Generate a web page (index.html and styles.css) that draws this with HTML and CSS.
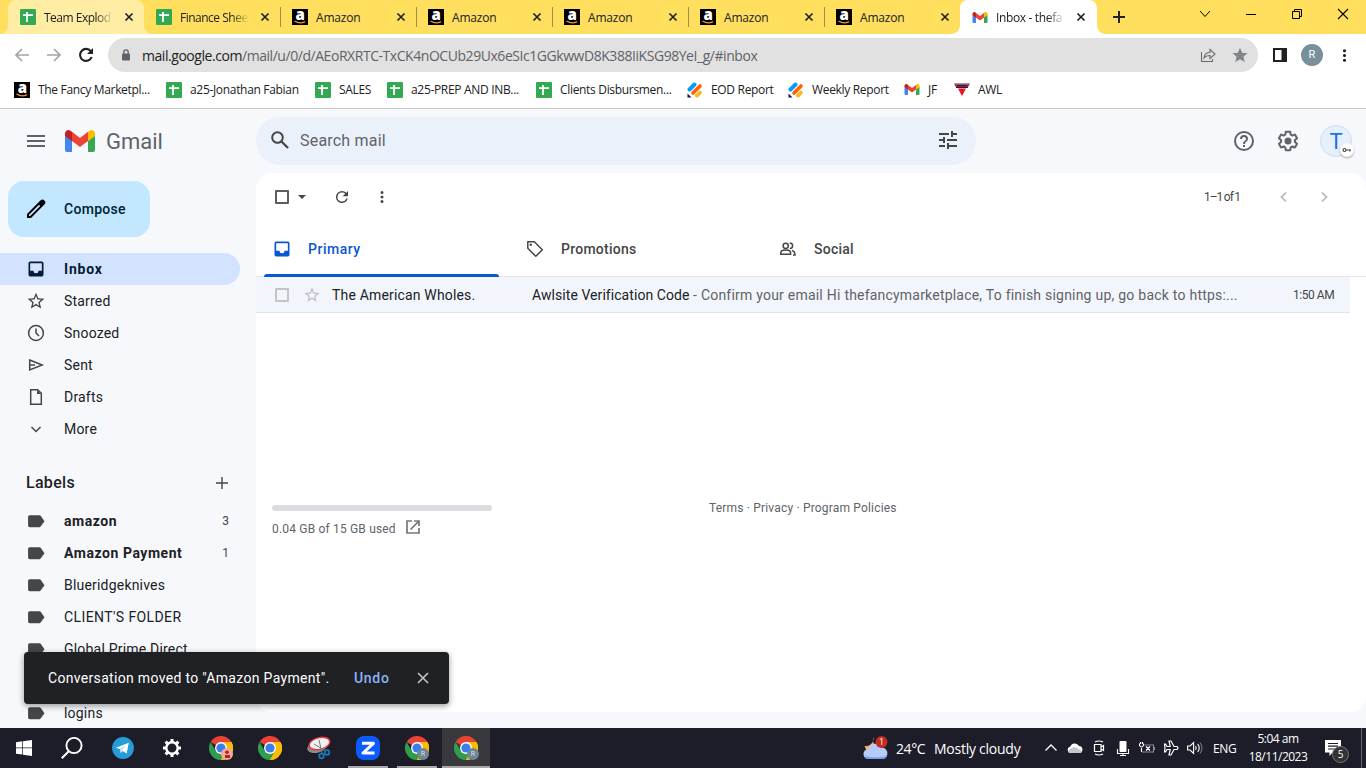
FILE: index.html
```
<!DOCTYPE html>
<html lang="en">
<head>
    <meta charset="utf-8">
    <title>Inbox - Gmail</title>
    <link rel="stylesheet" href="styles.css">
</head>
<body>
    <!-- shared icons -->
    <svg class="defs" width="0" height="0">
        <symbol id="sheets" viewBox="0 0 16 16">
            <rect width="16" height="16" rx="1" fill="#34a853"/>
            <path d="M3 6.200h10M7 3v10" stroke="#fff" stroke-width="1.800"/>
        </symbol>
        <symbol id="amazon" viewBox="0 0 16 16">
            <rect width="16" height="16" fill="#000"/>
            <text x="8.200" y="10.500" text-anchor="middle" font-family="Open Sans, sans-serif" font-weight="800" font-size="15" fill="#fff">a</text>
            <path d="M2.500 12q5.500 3.400 10.500.6" fill="none" stroke="#f39a1e" stroke-width="1.300"/>
        </symbol>
        <symbol id="gmail" viewBox="0 0 30 22">
            <path d="M0 5v15a2 2 0 0 0 2 2h5V10z" fill="#4285f4"/>
            <path d="M23 10v12h5a2 2 0 0 0 2-2V5z" fill="#34a853"/>
            <path d="M7 1.800 15 8l8-6.200V11l-8 6-8-6z" fill="#ea4335"/>
            <path d="M0 4v2l7 5.300V1.800L5.400.7C3.100-1 0 .7 0 4z" fill="#c5221f"/>
            <path d="M30 4v2l-7 5.300V1.800L24.600.7C26.900-1 30 .7 30 4z" fill="#fbbc04"/>
        </symbol>
        <symbol id="close" viewBox="0 0 16 16">
            <path d="M4.500 4.500l7 7M11.500 4.500l-7 7" stroke="currentColor" stroke-width="1.700"/>
        </symbol>
        <symbol id="jot" viewBox="0 0 16 16">
            <path d="M2.500 7.500l5-5" stroke="#0a9bff" stroke-width="4" stroke-linecap="round"/>
            <path d="M6 11l7-7" stroke="#ff6100" stroke-width="3.600" stroke-linecap="round"/>
            <path d="M10 13.500l2.800-2.800" stroke="#ffb629" stroke-width="4" stroke-linecap="round"/>
            <path d="M.5 11.500v4h4z" fill="#0a1551"/>
        </symbol>
        <symbol id="inbox" viewBox="0 0 24 24">
            <path fill="currentColor" d="M19 3H5a2 2 0 0 0-2 2v14a2 2 0 0 0 2 2h14a2 2 0 0 0 2-2V5a2 2 0 0 0-2-2zm0 11h-4a3 3 0 0 1-6 0H5V5h14z"/>
        </symbol>
        <symbol id="star" viewBox="0 0 24 24">
            <path fill="currentColor" d="M22 9.240l-7.190-.62L12 2 9.190 8.630 2 9.240l5.460 4.730L5.820 21 12 17.270 18.180 21l-1.630-7.030zM12 15.400l-3.760 2.270 1-4.280-3.320-2.880 4.380-.38L12 6.100l1.710 4.040 4.380.38-3.320 2.880 1 4.280z"/>
        </symbol>
        <symbol id="label" viewBox="0 0 24 24">
            <path fill="currentColor" d="M17.600 5.800A2 2 0 0 0 16 5H4.500a2 2 0 0 0-2 2v10.500a2 2 0 0 0 2 2H16c.7 0 1.300-.3 1.600-.8L22.200 12.200z"/>
        </symbol>
        <symbol id="more-vert" viewBox="0 0 24 24">
            <path fill="currentColor" d="M12 8a2 2 0 1 0 0-4 2 2 0 0 0 0 4zm0 2a2 2 0 1 0 0 4 2 2 0 0 0 0-4zm0 6a2 2 0 1 0 0 4 2 2 0 0 0 0-4z"/>
        </symbol>
        <symbol id="refresh" viewBox="0 0 24 24">
            <path fill="currentColor" d="M17.650 6.350A7.960 7.960 0 0 0 12 4a8 8 0 1 0 7.730 10h-2.080A6 6 0 1 1 12 6c1.660 0 3.140.69 4.220 1.780L13 11h7V4z"/>
        </symbol>
        <symbol id="chrome" viewBox="0 0 24 24">
            <path d="M12 12 1.600 6A12 12 0 0 1 22.400 6z" fill="#ea4335"/>
            <path d="M12 12 22.400 6A12 12 0 0 1 12 24z" fill="#fbbc04"/>
            <path d="M1.600 6A12 12 0 0 0 12 24l5.200-9-5.200 1-5.200-1z" fill="#2e9e4c"/>
            <path d="M12 6h10.400A12 12 0 0 1 12 24l5.200-9z" fill="#fbbc04"/>
            <circle cx="12" cy="12" r="6" fill="#fff"/>
            <circle cx="12" cy="12" r="4.600" fill="#3b7ded"/>
        </symbol>
    </svg>

    <div class="tabstrip">
        <div class="tab hover long"><svg class="fav"><use href="#sheets"/></svg><span>Team Explod</span><svg class="x"><use href="#close"/></svg></div>
        <div class="tab long"><svg class="fav"><use href="#sheets"/></svg><span>Finance Shee</span><svg class="x"><use href="#close"/></svg></div>
        <div class="tab line"><svg class="fav"><use href="#amazon"/></svg><span>Amazon</span><svg class="x"><use href="#close"/></svg></div>
        <div class="tab line"><svg class="fav"><use href="#amazon"/></svg><span>Amazon</span><svg class="x"><use href="#close"/></svg></div>
        <div class="tab line"><svg class="fav"><use href="#amazon"/></svg><span>Amazon</span><svg class="x"><use href="#close"/></svg></div>
        <div class="tab line"><svg class="fav"><use href="#amazon"/></svg><span>Amazon</span><svg class="x"><use href="#close"/></svg></div>
        <div class="tab line"><svg class="fav"><use href="#amazon"/></svg><span>Amazon</span><svg class="x"><use href="#close"/></svg></div>
        <div class="tab active long"><svg class="fav gm"><use href="#gmail"/></svg><span>Inbox - thefa</span><svg class="x"><use href="#close"/></svg></div>
        <svg class="newtab" viewBox="0 0 16 16"><path d="M8 2v12M2 8h12" stroke="#222" stroke-width="2"/></svg>
        <div class="window-buttons">
            <svg viewBox="0 0 12 12"><path d="M1 3l5 5.500L11 3" fill="none" stroke="#000"/></svg>
            <svg viewBox="0 0 12 12"><path d="M1 6.500h10" stroke="#000"/></svg>
            <svg viewBox="0 0 12 12"><path d="M1.500 3.500h7v7h-7zM3.500 3.500v-2h7v7h-2" fill="none" stroke="#000"/></svg>
            <svg viewBox="0 0 12 12"><path d="M1 1l10 10M11 1L1 11" stroke="#000" stroke-width="1.100"/></svg>
        </div>
    </div>

    <div class="toolbar">
        <svg class="nav off" viewBox="0 0 16 16"><path d="M15 8H2M8 2L2 8l6 6" fill="none" stroke="currentColor" stroke-width="1.700"/></svg>
        <svg class="nav off" viewBox="0 0 16 16"><path d="M1 8h13M8 2l6 6-6 6" fill="none" stroke="currentColor" stroke-width="1.700"/></svg>
        <svg class="nav" viewBox="0 0 16 16"><path d="M13.700 10A6 6 0 1 1 12.800 4.200" fill="none" stroke="currentColor" stroke-width="2.100"/><path d="M15 1v6H9z" fill="currentColor"/></svg>
        <div class="omnibox">
            <svg class="lock" viewBox="0 0 10 12"><rect x="1" y="4.500" width="8" height="7" rx="1" fill="#5f6368"/><path d="M2.800 5V3a2.200 2.200 0 0 1 4.400 0v2" fill="none" stroke="#5f6368" stroke-width="1.300"/></svg>
            <div class="url"><b>mail.google.com</b>/mail/u/0/d/AEoRXRTC-TxCK4nOCUb29Ux6eSIc1GGkwwD8K388IiKSG98YeI_g/#inbox</div>
            <svg class="share" viewBox="0 0 16 16"><path d="M1.500 5v9.500h11V12M4 11c.5-4 3-5.500 6-5.500V2.500l5 4.500-5 4.500V8.500C7.500 8.500 5.500 9 4 11z" fill="none" stroke="#6a6d71" stroke-width="1.100"/></svg>
            <svg class="bookmark-star" viewBox="0 0 16 16"><path d="M8 .8l2.100 5 5.400.4-4.100 3.500 1.300 5.300L8 12.200 3.300 15l1.300-5.300L.5 6.200l5.400-.4z" fill="#80868b"/></svg>
        </div>
        <svg class="panel" viewBox="0 0 14 14"><path d="M0 0h14v14H0zM2 2v10h6.500V2z" fill="#202124" fill-rule="evenodd"/></svg>
        <span class="profile">R</span>
        <svg class="menu"><use href="#more-vert"/></svg>
    </div>

    <div class="bookmarks">
        <a><svg><use href="#amazon"/></svg>The Fancy Marketpl...</a>
        <a><svg><use href="#sheets"/></svg>a25-Jonathan Fabian</a>
        <a><svg><use href="#sheets"/></svg>SALES</a>
        <a><svg><use href="#sheets"/></svg>a25-PREP AND INB...</a>
        <a><svg><use href="#sheets"/></svg>Clients Disbursmen...</a>
        <a><svg><use href="#jot"/></svg>EOD Report</a>
        <a><svg><use href="#jot"/></svg>Weekly Report</a>
        <a><svg class="gm"><use href="#gmail"/></svg>JF</a>
        <a><svg viewBox="0 0 16 16"><path d="M0 1.500h16L13.500 6h-11z" fill="#7d2a5a"/><path d="M3 3.500h10M2 5.500h12" stroke="#221a50"/><path d="M1 2h14" stroke="#c98a54"/><path d="M4 6.500h8L8 14z" fill="#f5101f"/></svg>AWL</a>
    </div>

    <div class="gmail">
        <header>
            <svg class="burger" viewBox="0 0 18 12"><path d="M0 1h18M0 6h18M0 11h18" stroke="#5f6368" stroke-width="2"/></svg>
            <svg class="logo"><use href="#gmail"/></svg>
            <span class="brand">Gmail</span>
            <div class="search">
                <svg viewBox="0 0 18 18"><circle cx="6.500" cy="6.500" r="5.300" fill="none" stroke="#444746" stroke-width="2"/><path d="M10.500 10.500l6.500 6.500" stroke="#444746" stroke-width="2.300"/></svg>
                <span>Search mail</span>
                <svg viewBox="0 0 18 18"><path d="M0 3h10M12 3h6M13 0v6M0 9h6M8 9h10M5 6v6M0 15h6M8 15h10M9 12v6" stroke="#444746" stroke-width="2"/></svg>
            </div>
            <div class="header-icons">
                <svg viewBox="0 0 24 24"><path fill="#5f6368" d="M11 18h2v-2h-2zm1-16a10 10 0 1 0 0 20 10 10 0 0 0 0-20zm0 18a8 8 0 1 1 0-16 8 8 0 0 1 0 16zm0-14a4 4 0 0 0-4 4h2a2 2 0 1 1 4 0c0 2-3 1.750-3 5h2c0-2.250 3-2.500 3-5a4 4 0 0 0-4-4z"/></svg>
                <svg viewBox="0 0 24 24"><path fill="#5f6368" d="M13.850 22.250h-3.700c-.74 0-1.360-.54-1.450-1.270l-.27-1.890c-.27-.14-.53-.29-.79-.46l-1.800.72c-.7.26-1.470-.03-1.810-.65L2.200 15.530c-.35-.66-.2-1.440.36-1.880l1.530-1.190c-.01-.15-.02-.3-.02-.46s.01-.31.020-.46l-1.520-1.190c-.59-.45-.74-1.260-.37-1.880l1.850-3.190c.34-.62 1.110-.9 1.790-.63l1.810.73c.26-.17.52-.32.78-.46l.27-1.910c.09-.7.71-1.250 1.440-1.250h3.700c.74 0 1.360.54 1.450 1.270l.27 1.890c.27.14.53.29.79.46l1.800-.72c.71-.26 1.480.03 1.820.65l1.840 3.180c.36.66.2 1.440-.36 1.880l-1.520 1.190c.1.150.2.300.2.460s-.1.310-.2.460l1.520 1.190c.56.450.72 1.230.37 1.860l-1.860 3.220c-.34.62-1.110.9-1.800.63l-1.800-.72c-.26.17-.52.32-.78.46l-.27 1.910c-.1.680-.72 1.220-1.460 1.220zm-3.230-2h2.760l.37-2.550.53-.22c.44-.18.88-.44 1.340-.78l.45-.34 2.380.96 1.380-2.400-2.030-1.580.07-.56c.03-.26.06-.51.060-.78s-.03-.53-.06-.78l-.07-.56 2.030-1.580-1.390-2.400-2.390.96-.45-.35c-.42-.32-.87-.58-1.330-.77l-.52-.22-.37-2.550h-2.760l-.37 2.550-.53.210c-.44.190-.88.440-1.340.790l-.45.330-2.380-.95-1.390 2.390 2.030 1.580-.07.560a7 7 0 0 0-.06.790c0 .26.020.53.060.78l.07.560-2.030 1.580 1.380 2.400 2.390-.96.450.35c.43.33.86.58 1.330.77l.53.220z"/><circle cx="12" cy="12" r="3.500" fill="#5f6368"/></svg>
                <span class="avatar">T<i><svg viewBox="0 0 10 6"><circle cx="2.500" cy="3" r="1.500" fill="none" stroke="#444" stroke-width="1.200"/><path d="M4.200 3H9M7.800 3v1.600" stroke="#444" stroke-width="1.200"/></svg></i></span>
            </div>
        </header>

        <div class="columns">
            <nav class="sidebar">
                <a class="compose"><svg viewBox="0 0 24 24"><path d="M20.400 3.600a2.800 2.800 0 0 0-4 0L3 17v4h4L20.400 7.600a2.800 2.800 0 0 0 0-4zM6.200 19H5v-1.200L15 7.800 16.200 9z" fill="#000"/></svg>Compose</a>
                <a class="item current"><svg><use href="#inbox"/></svg>Inbox</a>
                <a class="item"><svg><use href="#star"/></svg>Starred</a>
                <a class="item"><svg viewBox="0 0 20 20"><circle cx="10" cy="10" r="7.400" fill="none" stroke="currentColor" stroke-width="1.500"/><path d="M10 5.500V10l3 3" fill="none" stroke="currentColor" stroke-width="1.500"/></svg>Snoozed</a>
                <a class="item"><svg viewBox="0 0 20 20"><path d="M3.700 5l12.500 5-12.500 5zM4 10h5" fill="none" stroke="currentColor" stroke-width="1.500"/></svg>Sent</a>
                <a class="item"><svg viewBox="0 0 20 20"><path d="M4.700 2.700h7l3.600 3.600v11H4.700z" fill="none" stroke="currentColor" stroke-width="1.500"/><path d="M11 3v4h4z" fill="currentColor"/></svg>Drafts</a>
                <a class="item"><svg viewBox="0 0 20 20"><path d="M5.500 8l4.500 4.500L14.500 8" fill="none" stroke="currentColor" stroke-width="1.500"/></svg>More</a>
                <div class="labels-title">Labels<svg viewBox="0 0 12 12"><path d="M6 0v12M0 6h12" stroke="#444746" stroke-width="1.400"/></svg></div>
                <a class="item unread"><svg><use href="#label"/></svg>amazon<em>3</em></a>
                <a class="item unread"><svg><use href="#label"/></svg>Amazon Payment<em>1</em></a>
                <a class="item"><svg><use href="#label"/></svg>Blueridgeknives</a>
                <a class="item caps"><svg><use href="#label"/></svg>CLIENT'S FOLDER</a>
                <a class="item"><svg><use href="#label"/></svg>Global Prime Direct</a>
                <a class="item"><svg><use href="#label"/></svg></a>
                <a class="item"><svg><use href="#label"/></svg>logins</a>
            </nav>

            <main>
                <div class="actions">
                    <span class="checkbox"></span>
                    <span class="caret"></span>
                    <svg class="refresh"><use href="#refresh"/></svg>
                    <svg class="dots"><use href="#more-vert"/></svg>
                    <span class="count">1–1 of 1</span>
                    <svg class="page" viewBox="0 0 20 20"><path d="M12 5.500L7.500 10l4.500 4.500" fill="none" stroke="#b4b5b5" stroke-width="1.700"/></svg>
                    <svg class="page" viewBox="0 0 20 20"><path d="M8 5.500l4.500 4.500L8 14.500" fill="none" stroke="#b4b5b5" stroke-width="1.700"/></svg>
                </div>
                <div class="categories">
                    <div class="category selected"><svg><use href="#inbox"/></svg>Primary</div>
                    <div class="category"><svg viewBox="0 0 20 20"><path d="M2.800 2.800h6.500l8 8-6.500 6.500-8-8z" fill="none" stroke="currentColor" stroke-width="1.500" stroke-linejoin="round"/><circle cx="5.800" cy="5.800" r="1.200" fill="currentColor"/></svg>Promotions</div>
                    <div class="category"><svg viewBox="0 0 20 20"><path d="M2.800 15.200v-1.500c0-2 3-2.700 4.900-2.700s4.900.7 4.900 2.700v1.500z" fill="none" stroke="currentColor" stroke-width="1.500"/><circle cx="7.700" cy="6.800" r="2.600" fill="none" stroke="currentColor" stroke-width="1.500"/><path d="M11.800 4a2.800 2.800 0 0 1 0 5.600M14 11.500c2 .5 3 1.500 3 4.500h-2" fill="none" stroke="currentColor" stroke-width="1.500"/></svg>Social</div>
                </div>
                <div class="mail">
                    <span class="checkbox"></span>
                    <svg><use href="#star"/></svg>
                    <span class="sender">The American Wholes.</span>
                    <span class="subject">Awlsite Verification Code</span>
                    <span class="snippet">- Confirm your email Hi thefancymarketplace, To finish signing up, go back to https:...</span>
                    <span class="time">1:50 AM</span>
                </div>
                <footer>
                    <div class="storage">
                        <div class="bar"></div>
                        <span>0.04 GB of 15 GB used</span><svg viewBox="0 0 14 14"><path d="M6 1H1v12h12V8M8 1h5v5M13 1L4.500 9.500" fill="none" stroke="#747779" stroke-width="1.700"/></svg>
                    </div>
                    <div class="policies">Terms · Privacy · Program Policies</div>
                </footer>
            </main>
        </div>

        <div class="snackbar">
            <span>Conversation moved to "Amazon Payment".</span>
            <b>Undo</b>
            <svg viewBox="0 0 12 12"><path d="M1 1l10 10M11 1L1 11" stroke="#c4c7c5" stroke-width="1.600"/></svg>
        </div>
    </div>

    <div class="taskbar">
        <div class="apps">
            <span><svg width="16" height="16" viewBox="0 0 16 16"><path d="M0 2.200l6.300-.9v6.200H0zM7 1.200L16 0v7.500H7zM0 8.300h6.300v6.300L0 13.700zM7 8.300h9V16l-9-1.200z" fill="#fff"/></svg></span>
            <span><svg width="22" height="22" viewBox="0 0 22 22"><circle cx="13" cy="8.500" r="7.600" fill="none" stroke="#fff" stroke-width="1.900"/><path d="M8 14l-7.200 7.200" stroke="#fff" stroke-width="2"/></svg></span>
            <span><svg width="22" height="22" viewBox="0 0 22 22"><circle cx="11" cy="11" r="10.900" fill="#269cd8"/><path d="M4 10.800l12.800-5-2.100 10.800-4-2.700-2 2-.5-3.600z" fill="#fff"/><path d="M8.200 12.300l6-4.500-4.500 5.500-1 2.600z" fill="#b5d6ea"/></svg></span>
            <span><svg width="20" height="20" viewBox="0 0 20 20"><circle cx="10" cy="10" r="5.700" fill="none" stroke="#fff" stroke-width="2.400"/><path d="M10 1v3.500M10 15.500V19M1 10h3.500M15.500 10H19M3.600 3.600l2.500 2.500M13.900 13.900l2.500 2.500M16.400 3.600l-2.500 2.500M6.100 13.900l-2.500 2.500" stroke="#fff" stroke-width="3"/></svg></span>
            <span><svg width="24" height="24"><use href="#chrome"/></svg><i class="badge pink"></i></span>
            <span><svg width="24" height="24"><use href="#chrome"/></svg></span>
            <span><svg width="24" height="24" viewBox="0 0 24 24"><ellipse cx="10.500" cy="10.500" rx="10.500" ry="6" transform="rotate(-18 10.500 10.500)" fill="#8d8991"/><ellipse cx="12.500" cy="7.500" rx="10.500" ry="5.800" transform="rotate(-14 12.500 7.500)" fill="#f3f0f1" stroke="#dd3a3d" stroke-width="1.400"/><path d="M12 4l3 13M7 8l10 6" stroke="#777" fill="none"/><circle cx="14.500" cy="20" r="2.300" fill="none" stroke="#1679b9" stroke-width="1.800"/><circle cx="20" cy="16.500" r="2.300" fill="none" stroke="#1679b9" stroke-width="1.800"/></svg></span>
            <span class="open"><svg width="24" height="24" viewBox="0 0 24 24"><rect width="24" height="24" rx="8" fill="#0b5cff"/><path d="M6 7.300h11.500L7 17h11.500" fill="none" stroke="#fff" stroke-width="3" stroke-linejoin="round"/></svg></span>
            <span class="open"><svg width="24" height="24"><use href="#chrome"/></svg><i class="badge">R</i></span>
            <span class="focused"><svg width="24" height="24"><use href="#chrome"/></svg><i class="badge">R</i></span>
        </div>
        <div class="weather">
            <svg width="26" height="26" viewBox="0 0 26 26"><path d="M10.500 2a8 8 0 0 0 8 11l-4 4H4L1.500 11a8 8 0 0 0 9-9z" fill="#f9b04d"/><path d="M6 24a5 5 0 0 1-1-10 7 7 0 0 1 13-1.500A5.800 5.800 0 0 1 19.500 24z" fill="#b5cdf6"/><path d="M2 21q10 3 22 0-1 3-4 3H6q-3 0-4-3z" fill="#6d9df0"/><circle cx="18.500" cy="7" r="6" fill="#c62b20"/><text x="18.500" y="10.300" text-anchor="middle" font-family="Open Sans" font-size="9" fill="#fff">1</text></svg>
            <span class="temp">24°C</span><span class="sky">Mostly cloudy</span>
        </div>
        <div class="tray">
            <svg viewBox="0 0 16 16"><path d="M2.500 10.500L8 5l5.500 5.500" fill="none" stroke="#fff" stroke-width="1.300"/></svg>
            <svg viewBox="0 0 16 16"><path d="M3.500 13a3.200 3.200 0 0 1-.3-6.300A4.800 4.800 0 0 1 12 6a3.600 3.600 0 0 1 1 7z" fill="#fff"/><path d="M1 11q4-5 8-3.500l6 3.500q0 2-2 2H3q-2 0-2-2z" fill="#c5c5cc"/></svg>
            <svg viewBox="0 0 16 16"><path d="M3.500 4.500h6.500v7H3.500zM10 7l2.500-1.500v5L10 9M4 2q4-2 8 0M4 14q4 2 8 0" fill="none" stroke="#fff" stroke-width="1.200"/></svg>
            <svg viewBox="0 0 16 16"><rect x="4.500" y="1" width="7" height="11" rx="1" fill="#fff"/><path d="M2.500 9v4.500h11V9M8 13v3M5 15.500h6" fill="none" stroke="#fff" stroke-width="1.100"/></svg>
            <svg viewBox="0 0 16 16"><path d="M5.500 5h9v7H3M15.500 7v3" fill="none" stroke="#8d8c95" stroke-width="1.100"/><path d="M7 6.500l4 4M11 6.500l-4 4M2.500 8v4M.5 3.500v2q2 3 4 0v-2M1.500 2v2M3.500 2v2" fill="none" stroke="#fff" stroke-width="1.200"/></svg>
            <svg viewBox="0 0 16 16"><path d="M6 1h2l3 5.500h3q2 1.500 0 3h-3L8 15H6l1.200-5.500H4L2.500 12h-1L2 8 1.500 4h1L4 6.500h3.200z" fill="none" stroke="#fff" stroke-width="1.200"/></svg>
            <svg viewBox="0 0 16 16"><path d="M.6 6h2.500l3.500-3.500v11L3.100 10H.6zM8.500 6q1.500 2 0 4M10.700 4q3 4 0 8" fill="none" stroke="#fff" stroke-width="1.100"/><path d="M13 2.500q4 5.500 0 11" fill="none" stroke="#777783" stroke-width="1.100"/></svg>
        </div>
        <span class="lang">ENG</span>
        <div class="clock">5:04 am<br><span>18/11/2023</span></div>
        <div class="notifications">
            <svg width="16" height="16" viewBox="0 0 16 16"><path d="M0 0h16v12.500H7.500L4.500 16v-3.500H0z" fill="#fff"/><path d="M3 3.500h10M3 6.200h10M3 9h7" stroke="#1e1d2a" stroke-width="1.200"/></svg>
            <i>5</i>
        </div>
    </div>
</body>
</html>
```
FILE: styles.css
```
* {
    box-sizing: border-box;
}
body {
    margin: 0;
    width: 1366px;
    height: 768px;
    overflow: hidden;
    font-family: "Open Sans", "Liberation Sans", sans-serif;
    font-size: 12px;
    color: #202124;
    background: #fff;
}
svg {
    display: block;
    flex: none;
}
i, em {
    font-style: normal;
}
.defs {
    position: absolute;
}

/* browser window */
.tabstrip {
    display: flex;
    height: 34px;
    padding-left: 8px;
    background: #ffdf5d;
}
.tab {
    display: flex;
    align-items: center;
    width: 136px;
    padding-left: 12px;
    border-radius: 8px 8px 0 0;
}
.tab .fav {
    width: 16px;
    height: 16px;
    margin-right: 8px;
}
.tab .fav.gm, .bookmarks svg.gm {
    height: 11px;
}
.tab span {
    width: 69px;
    white-space: nowrap;
    letter-spacing: -0.2px;
}
.tab.long span {
    letter-spacing: -0.5px;
    -webkit-mask-image: linear-gradient(90deg, #000 75%, transparent);
    mask-image: linear-gradient(90deg, #000 75%, transparent);
}
.tab.active span {
    letter-spacing: -0.35px;
}
.tab .x {
    width: 16px;
    height: 16px;
    margin-left: 8px;
}
.tab.hover {
    --tab: #ffeda3;
    background: var(--tab);
}
.tab.line {
    background: linear-gradient(#a08d48, #a08d48) 0 7px / 1px 20px no-repeat;
}
.tab.active {
    --tab: #fff;
    width: 137px;
    background: var(--tab);
}
/* curved feet of the highlighted tabs */
.tab.hover, .tab.active {
    position: relative;
}
.tab.hover::before, .tab.active::before,
.tab.hover::after, .tab.active::after {
    content: "";
    position: absolute;
    bottom: 0;
    width: 8px;
    height: 8px;
}
.tab.hover::before, .tab.active::before {
    left: -8px;
    background: radial-gradient(circle at 0 0, transparent 7.5px, var(--tab) 8px);
}
.tab.hover::after, .tab.active::after {
    right: -8px;
    background: radial-gradient(circle at 100% 0, transparent 7.5px, var(--tab) 8px);
}
.newtab {
    width: 16px;
    height: 16px;
    margin: 9px 0 0 14px;
}
.window-buttons {
    display: flex;
    gap: 34px;
    margin: 8px 0 0 72px;
}
.window-buttons svg {
    width: 12px;
    height: 12px;
}
.toolbar {
    display: flex;
    align-items: center;
    height: 42px;
    padding-left: 14px;
}
.nav {
    width: 16px;
    height: 16px;
    margin-right: 16px;
}
.nav.off {
    color: #a3a4a6;
}
.omnibox {
    display: flex;
    align-items: center;
    width: 1150px;
    height: 34px;
    margin-left: -2px;
    padding-left: 13px;
    border-radius: 17px;
    background: #e1e1e1;
}
.lock {
    width: 10px;
    height: 12px;
    margin-right: 11px;
}
.url {
    width: 1058px;
    font-size: 14px;
    letter-spacing: -0.45px;
    color: #5f6368;
    white-space: nowrap;
}
.url b {
    font-weight: normal;
    color: #202124;
}
.share {
    width: 16px;
    height: 16px;
    margin-right: 16px;
}
.bookmark-star {
    width: 16px;
    height: 16px;
}
.panel {
    width: 14px;
    height: 14px;
    margin-left: 15px;
}
.profile {
    width: 22px;
    height: 22px;
    margin: 0 12px 0 14px;
    border-radius: 50%;
    background: #78909c;
    color: #fff;
    font: 11px/22px Roboto, sans-serif;
    text-align: center;
}
.menu {
    width: 19px;
    height: 19px;
}
.bookmarks {
    display: grid;
    grid-template-columns: 152px 149px 72px 149px 151px 101px 116px 50px 60px;
    height: 33px;
    padding: 5px 14px 11px;
    border-bottom: 1px solid #cbcbcb;
}
.bookmarks a {
    display: flex;
    align-items: center;
    gap: 8px;
    white-space: nowrap;
    letter-spacing: -0.32px;
}
.bookmarks svg {
    width: 16px;
    height: 16px;
}

/* gmail */
.gmail {
    position: relative;
    height: 619px;
    overflow: hidden;
    background: #f6f8fc;
    font-family: Roboto, "Liberation Sans", sans-serif;
    font-size: 14px;
}
header {
    display: flex;
    align-items: center;
    height: 64px;
    padding-left: 27px;
}
.burger {
    width: 18px;
    height: 12px;
}
.logo {
    width: 30px;
    height: 22px;
    margin: 0 11px 0 20px;
}
.brand {
    width: 150px;
    font-size: 22px;
    color: #5f6368;
}
.search {
    display: flex;
    align-items: center;
    width: 720px;
    height: 48px;
    padding: 0 19px 2px 15px;
    border-radius: 24px;
    background: #eaf1fb;
    color: #5f6368;
    font-size: 16px;
    letter-spacing: .2px;
}
.search svg {
    width: 18px;
    height: 18px;
}
.search span {
    flex: 1;
    margin-left: 11px;
}
.header-icons {
    display: flex;
    align-items: center;
    gap: 20px;
    margin-left: 256px;
}
.header-icons > svg {
    width: 24px;
    height: 24px;
}
.avatar {
    position: relative;
    width: 32px;
    height: 32px;
    border: 1px solid #cfdcf3;
    border-radius: 50%;
    background: #e6effc;
    color: #1a73e8;
    font-size: 22px;
    line-height: 31px;
    text-align: center;
}
.avatar i {
    position: absolute;
    right: -3px;
    bottom: -1px;
    width: 14px;
    height: 14px;
    padding: 4px 2px;
    border-radius: 50%;
    background: #fff;
    box-shadow: 0 1px 2px rgba(0, 0, 0, .35);
}
.avatar i svg {
    width: 10px;
    height: 6px;
}
.columns {
    display: flex;
}
.sidebar {
    width: 256px;
    padding-top: 8px;
}
.compose {
    display: flex;
    align-items: center;
    width: 142px;
    height: 56px;
    margin: 0 0 16px 8px;
    padding-left: 16px;
    border-radius: 16px;
    background: #c2e7ff;
    color: #001d35;
    font-weight: 500;
    letter-spacing: .3px;
}
.compose svg {
    width: 24px;
    height: 24px;
    margin-right: 16px;
}
.item {
    display: flex;
    align-items: center;
    width: 240px;
    height: 32px;
    padding-left: 26px;
    letter-spacing: .2px;
}
.item svg {
    width: 20px;
    height: 20px;
    margin-right: 18px;
    color: #444746;
}
.item.current {
    border-radius: 0 16px 16px 0;
    background: #d3e3fd;
    color: #001d35;
    font-weight: bold;
    letter-spacing: .8px;
}
.item.current svg {
    color: #001d35;
}
.item.unread {
    font-weight: bold;
    letter-spacing: .55px;
}
.item.caps {
    letter-spacing: .4px;
}
.item em {
    margin-left: auto;
    padding-right: 11px;
    font-size: 12px;
    font-weight: normal;
    letter-spacing: 0;
    color: #444746;
}
.labels-title {
    display: flex;
    align-items: center;
    justify-content: space-between;
    height: 60px;
    padding: 15px 28px 0 26px;
    font-size: 16px;
    font-weight: 500;
    letter-spacing: .3px;
}
.labels-title svg {
    width: 12px;
    height: 12px;
}
main {
    width: 1110px;
    height: 539px;
    border-radius: 16px;
    background: #fff;
}
.actions {
    display: flex;
    align-items: center;
    height: 48px;
    padding-left: 19px;
    color: #444746;
}
.checkbox {
    flex: none;
    width: 14px;
    height: 14px;
    border: 2px solid #5c5e5d;
    border-radius: 1px;
}
.caret {
    margin-left: 9px;
    border: 4px solid transparent;
    border-top-color: #444746;
    border-bottom: 0;
}
.refresh {
    width: 18px;
    height: 18px;
    margin-left: 27px;
}
.dots {
    width: 18px;
    height: 18px;
    margin-left: 22px;
}
.count {
    width: 36px;
    margin-left: 813px;
    font-size: 12px;
    white-space: nowrap;
    letter-spacing: -1px;
    word-spacing: -.5px;
}
.page {
    width: 20px;
    height: 20px;
    margin-left: 34px;
}
.page + .page {
    margin-left: 20px;
}
.categories {
    display: flex;
    height: 56px;
    padding-left: 8px;
    border-bottom: 1px solid #e6e8ea;
}
.category {
    display: flex;
    align-items: center;
    width: 253px;
    padding-left: 8px;
    color: #444746;
    font-weight: 500;
    letter-spacing: .25px;
}
.category svg {
    width: 20px;
    height: 20px;
    margin-right: 16px;
}
.category.selected {
    position: relative;
    color: #0b57d0;
    letter-spacing: .5px;
}
.category.selected::after {
    content: "";
    position: absolute;
    left: 0;
    bottom: -1px;
    width: 235px;
    height: 3px;
    border-radius: 3px 3px 0 0;
    background: #0b57d0;
}
.mail {
    display: flex;
    align-items: center;
    width: 1094px;
    height: 36px;
    padding-left: 19px;
    border-bottom: 1px solid #e0e4ea;
    background: #f2f6fc;
    white-space: nowrap;
}
.mail .checkbox {
    border-color: #c2c4c7;
}
.mail svg {
    width: 18px;
    height: 18px;
    margin: 0 11px 0 14px;
    color: #bcbec1;
}
.sender {
    width: 200px;
    letter-spacing: .17px;
}
.subject {
    width: 157px;
    letter-spacing: .06px;
}
.snippet {
    width: 600px;
    margin-left: 4px;
    color: #5f6368;
    letter-spacing: .2px;
    word-spacing: .15px;
}
.time {
    width: 41px;
    font-size: 12px;
    color: #444746;
    letter-spacing: -.45px;
}
footer {
    display: flex;
    padding: 192px 16px 0;
    font-size: 12px;
    letter-spacing: .18px;
    color: #5f6368;
}
.storage {
    display: flex;
    flex-wrap: wrap;
    align-items: center;
    width: 437px;
}
.storage .bar {
    width: 220px;
    height: 6px;
    margin-right: 200px;
    border-radius: 3px;
    background: #dadce0;
}
.storage span {
    width: 134px;
    margin-top: 11px;
}
.storage svg {
    width: 14px;
    height: 14px;
    margin-top: 7px;
}
.policies {
    margin-top: -4px;
}
.snackbar {
    position: absolute;
    left: 24px;
    bottom: 24px;
    display: flex;
    align-items: center;
    width: 425px;
    height: 52px;
    padding-left: 24px;
    border-radius: 4px;
    background: #202124;
    box-shadow: 0 2px 6px rgba(0, 0, 0, .4);
    color: #fff;
}
.snackbar span {
    width: 306px;
    letter-spacing: .32px;
}
.snackbar b {
    width: 63px;
    color: #8ab4f8;
    font-weight: 500;
    letter-spacing: .7px;
}
.snackbar svg {
    width: 12px;
    height: 12px;
}

/* windows taskbar */
.taskbar {
    display: flex;
    align-items: center;
    height: 40px;
    background: #1d1c29;
    color: #fff;
}
.apps {
    display: flex;
    width: 863px;
}
.apps span {
    position: relative;
    display: flex;
    align-items: center;
    justify-content: center;
    width: 49px;
    height: 40px;
}
.apps span:nth-child(2) {
    width: 50px;
    padding-right: 3px;
}
.apps span:first-child {
    width: 48px;
}
.apps .open::after, .apps .focused::after {
    content: "";
    position: absolute;
    left: 5px;
    right: 4px;
    bottom: 0;
    height: 2px;
    background: #aaa9a8;
}
.apps .focused {
    width: 48px;
    margin-left: 1px;
    background: #39383c;
}
.apps .focused::after {
    left: 0;
    right: 0;
}
.badge {
    position: absolute;
    left: 25px;
    top: 20px;
    width: 12px;
    height: 12px;
    border-radius: 50%;
    background: #6f8792;
    color: #dde;
    font: 7px/12px Roboto, sans-serif;
    text-align: center;
}
.badge.pink {
    background: radial-gradient(circle at 50% 35%, #b3261e 1.500px, transparent 2px), linear-gradient(#b3261e, #b3261e) 50% 75% / 5px 3px no-repeat, #f4a9a0;
}
.weather {
    display: flex;
    align-items: center;
    width: 180px;
    font-size: 14px;
    white-space: nowrap;
}
.temp {
    width: 38px;
    margin-left: 7px;
    letter-spacing: -.4px;
}
.sky {
    letter-spacing: -.25px;
}
.tray {
    display: flex;
    gap: 8px;
    width: 170px;
}
.tray svg {
    width: 16px;
    height: 16px;
}
.lang {
    width: 31px;
    letter-spacing: -.3px;
}
.clock {
    width: 68px;
    font-size: 12px;
    line-height: 18px;
    text-align: center;
    letter-spacing: -.5px;
}
.notifications {
    position: relative;
    width: 37px;
    height: 40px;
    margin-left: 13px;
    padding-top: 12px;
    border-right: 1px solid #65646d;
}
.notifications i {
    position: absolute;
    left: 7px;
    top: 18px;
    width: 17px;
    height: 17px;
    border: 1px solid #777;
    border-radius: 50%;
    background: #333;
    font-size: 10px;
    line-height: 15px;
    text-align: center;
}
```
